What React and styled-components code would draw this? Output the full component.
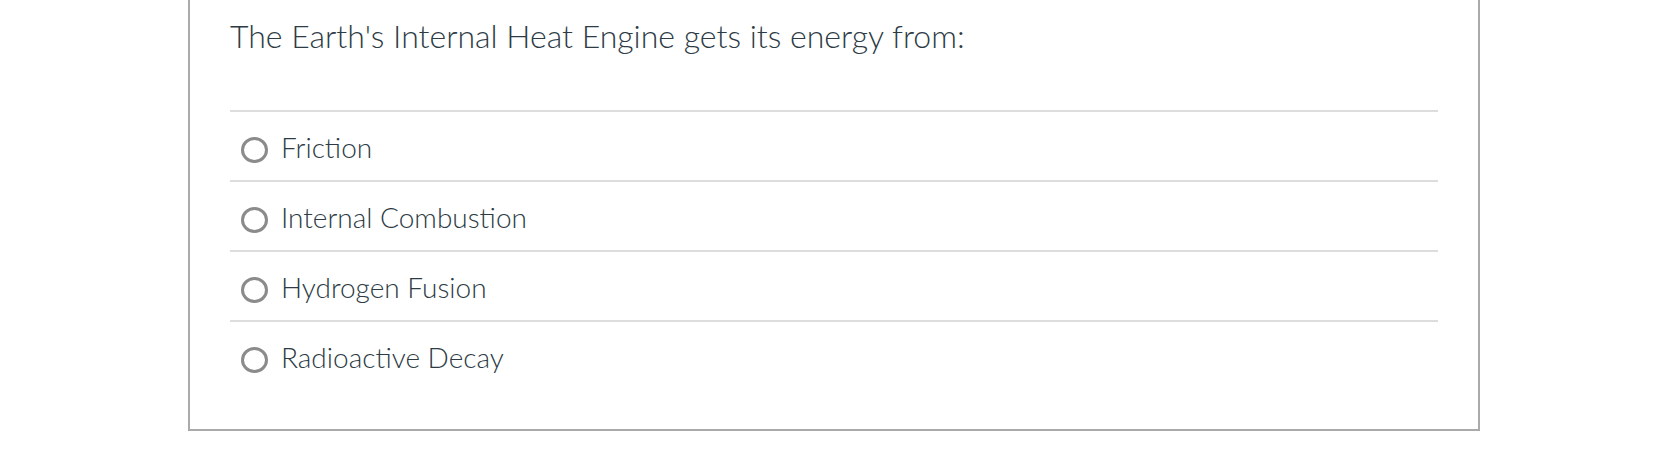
import React from "react";
import styled, { createGlobalStyle } from "styled-components";

const Global = createGlobalStyle`
  html, body { margin: 0; padding: 0; background: #ffffff; }
  body { font-family: Lato, "Noto Sans", sans-serif; }
`;

const Card = styled.div`
  margin-left: 188px;
  width: 1292px;
  box-sizing: border-box;
  border: 2px solid #aaaaaa;
  border-top: none;
  background: #ffffff;
  padding: 0 40px 39px;
`;

const Question = styled.div`
  padding: 17px 0 55px;
  font-size: 32px;
  line-height: 38px;
  font-weight: 300;
  color: #2d3b45;
`;

const Option = styled.label`
  display: flex;
  align-items: flex-start;
  box-sizing: border-box;
  height: 70px;
  border-top: 2px solid #dddddd;
  padding: 18px 0 0 11px;
  cursor: pointer;
`;

const Radio = styled.span`
  flex: none;
  box-sizing: border-box;
  width: 27px;
  height: 26px;
  margin-top: 7px;
  border: 3px solid #8b8b8b;
  border-radius: 50%;
`;

const OptionText = styled.span`
  margin-left: 13px;
  font-size: 28px;
  line-height: 34px;
  font-weight: 300;
  color: #2d3b45;
`;

const answers = [
  "Friction",
  "Internal Combustion",
  "Hydrogen Fusion",
  "Radioactive Decay",
];

export default function App() {
  return (
    <>
      <Global />
      <Card>
        <Question>The Earth's Internal Heat Engine gets its energy from:</Question>
        {answers.map((a) => (
          <Option key={a}>
            <Radio />
            <OptionText>{a}</OptionText>
          </Option>
        ))}
      </Card>
    </>
  );
}
